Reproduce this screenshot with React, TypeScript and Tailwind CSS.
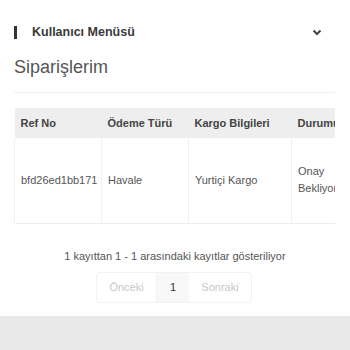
import React from 'react';

const cols = [
  { key: 'ref', label: 'Ref No', w: 'w-[87px]' },
  { key: 'pay', label: 'Ödeme Türü', w: 'w-[87px]' },
  { key: 'cargo', label: 'Kargo Bilgileri', w: 'w-[103px]' },
  { key: 'status', label: 'Durumu', w: 'w-[58px]' },
  { key: 'total', label: 'Toplam', w: 'w-[70px]' },
];

const App: React.FC = () => {
  return (
    <div className="w-[350px] h-[350px] bg-white flex flex-col overflow-hidden font-['Liberation_Sans',Arial,sans-serif]">
      <div className="px-[14px] flex-1">
        {/* menu header */}
        <div className="flex items-center justify-between h-[14px] mt-[25px]">
          <div className="flex items-center">
            <span className="block w-[3px] h-[13px] bg-[#333]" />
            <span className="ml-[15px] text-[12.5px] font-bold text-[#3a3a3a]">Kullanıcı Menüsü</span>
          </div>
          <svg width="10" height="7" viewBox="0 0 10 7" className="mr-[14px] mt-[1px]">
            <path d="M1.5 1.5 L5 5 L8.5 1.5" fill="none" stroke="#444" strokeWidth="2" />
          </svg>
        </div>

        <h1 className="mt-[17px] text-[18px] leading-[22px] text-[#555] font-normal">Siparişlerim</h1>
        <div className="mt-[14px] h-px bg-[#f0f0f0] w-[321px]" />

        {/* table, scrolls sideways in the original */}
        <div className="mt-[15px] w-[321px] overflow-hidden">
          <table className="table-fixed border-collapse text-[11px] w-[405px]">
            <thead>
              <tr className="bg-[#eeeeee] h-[30px]">
                {cols.map(c => (
                  <th key={c.key} className={`${c.w} text-left font-bold text-[#444] px-[6px] whitespace-nowrap`}>
                    {c.label}
                  </th>
                ))}
              </tr>
            </thead>
            <tbody>
              <tr className="h-[85px] text-[#555] border-b border-[#eeeeee]">
                <td className="px-[6px] border-l border-r border-[#f2f2f2]">bfd26ed1bb171</td>
                <td className="px-[6px] border-r border-[#f2f2f2]">Havale</td>
                <td className="px-[6px] border-r border-[#f2f2f2]">Yurtiçi Kargo</td>
                <td className="px-[6px] border-r border-[#f2f2f2] leading-[17px]">Onay Bekliyor</td>
                <td className="px-[6px]">120,00 TL</td>
              </tr>
            </tbody>
          </table>
        </div>

        <p className="mt-[24px] text-center text-[11px] text-[#555]">
          1 kayıttan 1 - 1 arasındaki kayıtlar gösteriliyor
        </p>

        <div className="mt-[8px] flex justify-center">
          <div className="flex h-[31px] border border-[#f2f2f2] rounded-[3px] text-[11px] ml-[-2px]">
            <span className="w-[60px] flex items-center justify-center text-[#c8c8c8] border-r border-[#f2f2f2]">Önceki</span>
            <span className="w-[32px] flex items-center justify-center text-[#333] bg-[#f8f8f8]">1</span>
            <span className="w-[62px] flex items-center justify-center text-[#c8c8c8]">Sonraki</span>
          </div>
        </div>
      </div>

      <div className="h-[34px] bg-[#e9e9e9] shrink-0" />
    </div>
  );
};

export default App;
